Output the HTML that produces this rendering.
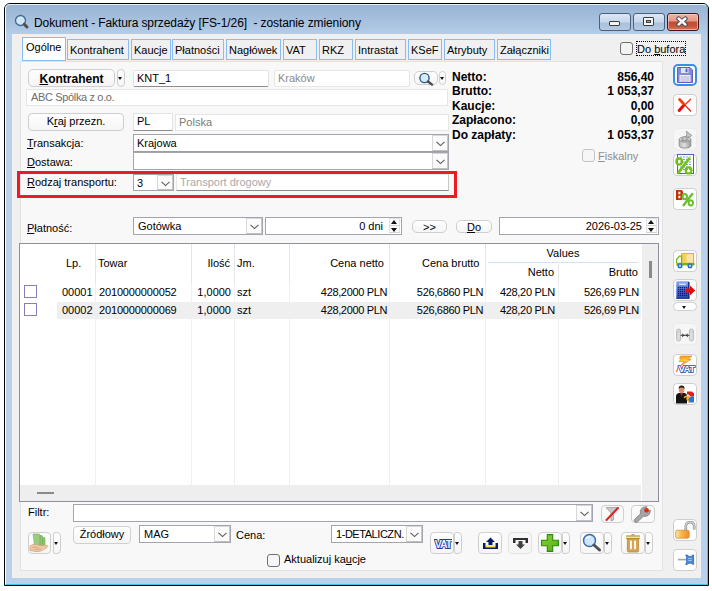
<!DOCTYPE html>
<html><head><meta charset="utf-8">
<style>
*{box-sizing:border-box}
html,body{margin:0;padding:0}
body{width:712px;height:591px;background:#fff;position:relative;overflow:hidden;font-family:"Liberation Sans",sans-serif;font-size:11px;color:#000}
.a{position:absolute}
.t{position:absolute;white-space:nowrap;line-height:13px;font-size:11px}
.win{left:4px;top:3px;width:705px;height:583px;border:1px solid #000;border-radius:6px 6px 0 0;background:linear-gradient(#98b4d3 0px,#a9c3e0 20px,#b6cfe9 32px,#b9d1ea 60px,#b9d1ea)}
.hl{left:5px;top:4px;width:703px;height:581px;border-left:1px solid #fff;border-top:1px solid #e8f0f8;border-right:1px solid #3ec8e8;border-bottom:1px solid #3ec8e8;border-radius:5px 5px 0 0}
.client{left:12px;top:34px;width:689px;height:544px;background:#f0f0f0}
.panel{left:20px;top:61px;width:643px;height:510px;background:#f8f8f8;border:1px solid #e2e2e2}
.tab{position:absolute;top:39px;height:21px;border:1px solid #87bdf0;background:#f0f0f0;line-height:13px;padding-top:4px;padding-left:2px;text-align:left;white-space:nowrap}
.tab.sel{top:37px;height:24px;background:#fff;padding-top:3px;padding-left:3px;border-bottom:1px solid #87bdf0}
.btn{position:absolute;border:1px solid #cfcfcf;border-radius:4px;background:linear-gradient(#fefefe,#f6f6f6);text-align:center;white-space:nowrap;line-height:14px}
.fld{position:absolute;background:#fff;border:1px solid #e3e3e3;border-bottom:1px solid #8c8c8c;white-space:nowrap;line-height:14px}
.fldl{position:absolute;background:#fff;border:1px solid #e6e6e6;white-space:nowrap;line-height:14px}
.cmb{position:absolute;background:#fff;border:1px solid #a3a5ad;white-space:nowrap;line-height:14px;padding-top:1px}
.dd{position:absolute;right:0;top:0;bottom:0;width:16px;background:#fbfbfb;border:1px solid #d8d8d8;border-right-color:#c8c8c8;border-bottom-color:#c0c0c0}
.rb{position:absolute;left:673px;width:24px;height:22px;border:1px solid #cfcfcf;border-radius:4px;background:#fff}
.u{text-decoration:underline}
.b12{font-weight:bold;font-size:12px;line-height:14px}
</style></head><body>
<div class="a win"></div>
<div class="a hl"></div>
<!-- title -->
<svg class="a" style="left:14px;top:14px" width="16" height="16" viewBox="0 0 16 16"><circle cx="6.5" cy="6.5" r="5" fill="#cfe6f8" stroke="#3f6a90" stroke-width="1.3"/><path d="M10.2 10.2 L13 13" stroke="#505050" stroke-width="3" stroke-linecap="round"/></svg>
<div class="t" style="left:34px;top:16px;font-size:12px;line-height:14px;letter-spacing:-0.1px;color:#000">Dokument - Faktura sprzedaży [FS-1/26]&nbsp; - zostanie zmieniony</div>
<div class="a client"></div>

<!-- title buttons -->
<div class="a" style="left:599px;top:13px;width:32px;height:18px;border:1px solid #4e5e7c;border-radius:3px;background:linear-gradient(#dbe7f4 0,#c6d8ec 8px,#a9c1dc 9px,#b6cce3 17px)"></div>
<div class="a" style="left:609px;top:21px;width:11px;height:5px;border:1px solid #3c3c3c;background:#f4f4f4;border-radius:1px"></div>
<div class="a" style="left:633px;top:13px;width:32px;height:18px;border:1px solid #4e5e7c;border-radius:3px;background:linear-gradient(#dbe7f4 0,#c6d8ec 8px,#a9c1dc 9px,#b6cce3 17px)"></div>
<div class="a" style="left:643px;top:17px;width:11px;height:9px;border:1px solid #3c3c3c;background:#f4f4f4;border-radius:1px"></div>
<div class="a" style="left:646px;top:20px;width:5px;height:3px;border:1px solid #3c3c3c;background:#9ab"></div>
<div class="a" style="left:667px;top:13px;width:32px;height:18px;border:1px solid #4a1018;border-radius:3px;background:linear-gradient(#eeb2a4 0,#e09a88 7px,#c24a30 8px,#c85438 12px,#dc7e68 17px);box-shadow:inset 0 0 0 1px rgba(255,220,210,0.55)"></div>
<svg class="a" style="left:675px;top:16px" width="14" height="11" viewBox="0 0 14 11"><path d="M3.6 2.6 L10.4 8.4 M10.4 2.6 L3.6 8.4" stroke="#3c4450" stroke-width="4.4" stroke-linecap="round"/><path d="M3.6 2.6 L10.4 8.4 M10.4 2.6 L3.6 8.4" stroke="#f6f6f6" stroke-width="2.6" stroke-linecap="round"/></svg>
<!-- tabs -->
<div class="tab" style="left:67px;width:62px">Kontrahent</div>
<div class="tab" style="left:131px;width:40px">Kaucje</div>
<div class="tab" style="left:172px;width:52px">Płatności</div>
<div class="tab" style="left:226px;width:55px">Nagłówek</div>
<div class="tab" style="left:283px;width:34px">VAT</div>
<div class="tab" style="left:319px;width:34px">RKZ</div>
<div class="tab" style="left:355px;width:51px">Intrastat</div>
<div class="tab" style="left:408px;width:34px">KSeF</div>
<div class="tab" style="left:444px;width:51px">Atrybuty</div>
<div class="tab" style="left:497px;width:54px">Załączniki</div>
<div class="a panel"></div>
<div class="tab sel" style="left:22px;width:44px">Ogólne</div>
<!-- do bufora -->
<div class="a" style="left:620px;top:42px;width:13px;height:13px;border:1px solid #6f6f6f;border-radius:3px;background:#f3f3f3"></div>
<div class="a" style="left:636px;top:41px;width:50px;height:15px;border:1px dotted #000"></div>
<div class="t" style="left:637px;top:43px;color:#000">Do <span class="u">b</span>ufora</div>

<!-- form -->
<div class="btn" style="left:28px;top:69px;width:87px;height:18px;font-weight:bold;font-size:12px;line-height:17px;padding-top:1px;border-radius:5px"><span class="u">K</span>ontrahent</div>
<div class="btn" style="left:117px;top:69px;width:8px;height:18px"></div>
<div class="a" style="left:118px;top:77px;width:0;height:0;border-left:2.5px solid transparent;border-right:2.5px solid transparent;border-top:3px solid #111"></div>
<div class="fld" style="left:133px;top:70px;width:136px;height:17px;padding-left:3px;border-radius:2px">KNT_1</div>
<div class="fldl" style="left:274px;top:70px;width:136px;height:17px;padding-left:3px;border-radius:2px;color:#8a8a8a">Kraków</div>
<div class="btn" style="left:414px;top:71px;width:24px;height:14px;border-radius:5px"></div>
<svg class="a" style="left:418px;top:72px" width="16" height="14" viewBox="0 0 16 14"><circle cx="6.5" cy="6" r="4.6" fill="#d6ecfb" stroke="#2c5a86" stroke-width="1.4"/><path d="M10 9.5 L14 12.6" stroke="#4a4a4a" stroke-width="2.4" stroke-linecap="round"/></svg>
<div class="btn" style="left:439px;top:71px;width:7px;height:14px;border-radius:4px"></div>
<div class="a" style="left:440px;top:77px;width:0;height:0;border-left:2.5px solid transparent;border-right:2.5px solid transparent;border-top:3px solid #111"></div>
<div class="fldl" style="left:26px;top:89px;width:422px;height:17px;padding-left:4px;color:#6e6e6e;letter-spacing:-0.35px">ABC Spólka z o.o.</div>

<div class="btn" style="left:28px;top:113px;width:96px;height:18px">K<span class="u">r</span>aj przezn.</div>
<div class="fld" style="left:133px;top:113px;width:40px;height:18px;padding-left:3px">PL</div>
<div class="fldl" style="left:175px;top:114px;width:274px;height:17px;padding-left:3px;color:#7a7a7a">Polska</div>

<div class="t" style="left:27px;top:137px"><span class="u">T</span>ransakcja:</div>
<div class="cmb" style="left:133px;top:134px;width:316px;height:19px;padding-left:3px;border-bottom:2px solid #a0a0a0">Krajowa<div class="dd"><svg style="position:absolute;left:3px;top:5px" width="9" height="6" viewBox="0 0 9 6"><path d="M0.5 0.8 L4.5 4.6 L8.5 0.8" fill="none" stroke="#5a5a5a" stroke-width="1.1"/></svg></div></div>
<div class="t" style="left:27px;top:156px"><span class="u">D</span>ostawa:</div>
<div class="cmb" style="left:133px;top:152px;width:316px;height:18px;padding-left:3px"><div class="dd"><svg style="position:absolute;left:3px;top:5px" width="9" height="6" viewBox="0 0 9 6"><path d="M0.5 0.8 L4.5 4.6 L8.5 0.8" fill="none" stroke="#5a5a5a" stroke-width="1.1"/></svg></div></div>

<div class="a" style="left:17px;top:171px;width:440px;height:27px;border:3px solid #ed1c24"></div>
<div class="t" style="left:27px;top:176px"><span class="u">R</span>odzaj transportu:</div>
<div class="cmb" style="left:133px;top:174px;width:41px;height:17px;padding-left:3px">3<div class="dd"><svg style="position:absolute;left:3px;top:5px" width="9" height="6" viewBox="0 0 9 6"><path d="M0.5 0.8 L4.5 4.6 L8.5 0.8" fill="none" stroke="#5a5a5a" stroke-width="1.1"/></svg></div></div>
<div class="fld" style="left:176px;top:174px;width:273px;height:17px;padding-left:3px;color:#a9a9a9;border-color:#e6e6e6 #c8c8c8 #8c8c8c #e6e6e6">Transport drogowy</div>

<div class="t" style="left:27px;top:222px"><span class="u">P</span>łatność:</div>
<div class="cmb" style="left:133px;top:217px;width:130px;height:18px;padding-left:4px">Gotówka<div class="dd"><svg style="position:absolute;left:3px;top:5px" width="9" height="6" viewBox="0 0 9 6"><path d="M0.5 0.8 L4.5 4.6 L8.5 0.8" fill="none" stroke="#5a5a5a" stroke-width="1.1"/></svg></div></div>
<div class="cmb" style="left:265px;top:217px;width:137px;height:18px;text-align:right;padding-right:18px">0 dni</div>
<div class="btn" style="left:412px;top:220px;width:35px;height:13px;line-height:12px;border-radius:5px">&gt;&gt;</div>
<div class="btn" style="left:456px;top:220px;width:36px;height:13px;line-height:12px;border-radius:5px"><span class="u">D</span>o</div>
<div class="cmb" style="left:499px;top:217px;width:160px;height:18px;text-align:right;padding-right:16px">2026-03-25</div>

<div class="a" style="left:389px;top:218px;width:11px;height:15px;background:#fafafa;border:1px solid #e2e2e2;border-bottom-color:#d0d0d0"></div>
<div class="a" style="left:389px;top:225px;width:11px;height:1px;background:#d6d6d6"></div>
<div class="a" style="left:391px;top:220px;width:0;height:0;border-left:3.5px solid transparent;border-right:3.5px solid transparent;border-bottom:4px solid #111"></div>
<div class="a" style="left:391px;top:228px;width:0;height:0;border-left:3.5px solid transparent;border-right:3.5px solid transparent;border-top:4px solid #111"></div>
<div class="a" style="left:646px;top:218px;width:11px;height:15px;background:#fafafa;border:1px solid #e2e2e2;border-bottom-color:#d0d0d0"></div>
<div class="a" style="left:646px;top:225px;width:11px;height:1px;background:#d6d6d6"></div>
<div class="a" style="left:648px;top:220px;width:0;height:0;border-left:3.5px solid transparent;border-right:3.5px solid transparent;border-bottom:4px solid #111"></div>
<div class="a" style="left:648px;top:228px;width:0;height:0;border-left:3.5px solid transparent;border-right:3.5px solid transparent;border-top:4px solid #111"></div>
<!-- summary -->
<div class="t b12" style="left:452px;top:70px">Netto:</div><div class="t b12" style="left:560px;top:70px;width:94px;text-align:right">856,40</div>
<div class="t b12" style="left:452px;top:84px">Brutto:</div><div class="t b12" style="left:560px;top:84px;width:94px;text-align:right">1 053,37</div>
<div class="t b12" style="left:452px;top:99px">Kaucje:</div><div class="t b12" style="left:560px;top:99px;width:94px;text-align:right">0,00</div>
<div class="t b12" style="left:452px;top:113px">Zapłacono:</div><div class="t b12" style="left:560px;top:113px;width:94px;text-align:right">0,00</div>
<div class="t b12" style="left:452px;top:128px">Do zapłaty:</div><div class="t b12" style="left:560px;top:128px;width:94px;text-align:right">1 053,37</div>


<div class="a" style="left:582px;top:149px;width:13px;height:13px;border:1px solid #c4c4c4;border-radius:3px;background:#f6f6f6"></div>
<div class="t" style="left:598px;top:150px;color:#8d8d8d"><span class="u">F</span>iskalny</div>

<!-- grid -->
<div class="a" style="left:19px;top:243px;width:640px;height:259px;background:#fff;border:1px solid #8e8f98"></div>
<div class="a" style="left:642px;top:244px;width:16px;height:257px;background:#eeeeee"></div>
<div class="a" style="left:649px;top:261px;width:3px;height:17px;background:#8a8a8a"></div>
<div class="a" style="left:20px;top:485px;width:621px;height:16px;background:#eeeeee"></div>
<div class="a" style="left:37px;top:492px;width:17px;height:2px;background:#8a8a8a"></div>
<!-- header col lines -->
<div class="a" style="left:95px;top:244px;width:1px;height:39px;background:#e6e6e6"></div>
<div class="a" style="left:191px;top:244px;width:1px;height:39px;background:#e6e6e6"></div>
<div class="a" style="left:234px;top:244px;width:1px;height:39px;background:#e6e6e6"></div>
<div class="a" style="left:289px;top:244px;width:1px;height:39px;background:#e6e6e6"></div>
<div class="a" style="left:389px;top:244px;width:1px;height:39px;background:#e6e6e6"></div>
<div class="a" style="left:485px;top:244px;width:1px;height:39px;background:#e6e6e6"></div>
<div class="a" style="left:558px;top:264px;width:1px;height:19px;background:#e6e6e6"></div>
<div class="a" style="left:488px;top:262px;width:150px;height:1px;background:#cfe4f5"></div>
<!-- body col lines -->
<div class="a" style="left:95px;top:283px;width:1px;height:202px;background:#f0f0f0"></div>
<div class="a" style="left:191px;top:283px;width:1px;height:202px;background:#f0f0f0"></div>
<div class="a" style="left:234px;top:283px;width:1px;height:202px;background:#f0f0f0"></div>
<div class="a" style="left:289px;top:283px;width:1px;height:202px;background:#f0f0f0"></div>
<div class="a" style="left:389px;top:283px;width:1px;height:202px;background:#f0f0f0"></div>
<div class="a" style="left:485px;top:283px;width:1px;height:202px;background:#f0f0f0"></div>
<div class="a" style="left:558px;top:283px;width:1px;height:202px;background:#f0f0f0"></div>
<div class="a" style="left:57px;top:302px;width:584px;height:17px;background:#efefef"></div>
<!-- header text -->
<div class="t" style="left:66px;top:257px">Lp.</div>
<div class="t" style="left:98px;top:257px">Towar</div>
<div class="t" style="left:180px;top:257px;width:50px;text-align:right">Ilość</div>
<div class="t" style="left:237px;top:257px">Jm.</div>
<div class="t" style="left:300px;top:257px;width:84px;text-align:right">Cena netto</div>
<div class="t" style="left:422px;top:257px">Cena brutto</div>
<div class="t" style="left:530px;top:247px;width:66px;text-align:center">Values</div>
<div class="t" style="left:500px;top:266px;width:54px;text-align:right">Netto</div>
<div class="t" style="left:580px;top:266px;width:58px;text-align:right">Brutto</div>
<!-- rows -->
<div class="a" style="left:24px;top:285px;width:13px;height:13px;border:1px solid #8680b4;background:#fff"></div>
<div class="a" style="left:24px;top:303px;width:13px;height:13px;border:1px solid #8680b4;background:#fff"></div>
<div class="t" style="left:62px;top:283px;line-height:18px">00001<br>00002</div>
<div class="t" style="left:99px;top:283px;line-height:18px;letter-spacing:-0.15px">2010000000052<br>2010000000069</div>
<div class="t" style="left:180px;top:283px;width:51px;text-align:right;line-height:18px">1,0000<br>1,0000</div>
<div class="t" style="left:237px;top:283px;line-height:18px">szt<br>szt</div>
<div class="t" style="left:300px;top:283px;width:87px;text-align:right;line-height:18px;letter-spacing:-0.35px">428,2000 PLN<br>428,2000 PLN</div>
<div class="t" style="left:400px;top:283px;width:83px;text-align:right;line-height:18px;letter-spacing:-0.35px">526,6860 PLN<br>526,6860 PLN</div>
<div class="t" style="left:490px;top:283px;width:65px;text-align:right;line-height:18px;letter-spacing:-0.3px">428,20 PLN<br>428,20 PLN</div>
<div class="t" style="left:570px;top:283px;width:69px;text-align:right;line-height:18px;letter-spacing:-0.3px">526,69 PLN<br>526,69 PLN</div>

<!-- bottom -->
<div class="t" style="left:28px;top:506px">Filtr:</div>
<div class="cmb" style="left:73px;top:504px;width:520px;height:18px"><div class="dd"><svg style="position:absolute;left:3px;top:5px" width="9" height="6" viewBox="0 0 9 6"><path d="M0.5 0.8 L4.5 4.6 L8.5 0.8" fill="none" stroke="#5a5a5a" stroke-width="1.1"/></svg></div></div>
<div class="btn" style="left:601px;top:505px;width:23px;height:18px;border-radius:4px;background:#fafafa"></div>
<div class="btn" style="left:631px;top:505px;width:24px;height:18px;border-radius:4px;background:#fafafa"></div>
<div class="btn" style="left:28px;top:532px;width:23px;height:22px;border-radius:4px"></div>
<div class="btn" style="left:53px;top:532px;width:8px;height:22px;border-radius:2px 4px 4px 2px"></div>
<div class="btn" style="left:73px;top:526px;width:58px;height:18px;font-size:11px;line-height:15px">Źródłowy</div>
<div class="cmb" style="left:139px;top:525px;width:92px;height:18px;padding-left:4px">MAG<div class="dd"><svg style="position:absolute;left:3px;top:5px" width="9" height="6" viewBox="0 0 9 6"><path d="M0.5 0.8 L4.5 4.6 L8.5 0.8" fill="none" stroke="#5a5a5a" stroke-width="1.1"/></svg></div></div>
<div class="t" style="left:236px;top:529px">Cena:</div>
<div class="cmb" style="left:331px;top:525px;width:92px;height:18px;padding-left:4px;overflow:hidden;letter-spacing:-0.45px">1-DETALICZN.<div class="dd"><svg style="position:absolute;left:3px;top:5px" width="9" height="6" viewBox="0 0 9 6"><path d="M0.5 0.8 L4.5 4.6 L8.5 0.8" fill="none" stroke="#5a5a5a" stroke-width="1.1"/></svg></div></div>
<div class="a" style="left:267px;top:554px;width:13px;height:13px;border:1px solid #707070;border-radius:3px;background:#f6f6f6"></div>
<div class="t" style="left:284px;top:553px">Aktualizuj ka<span class="u">u</span>cje</div>
<div class="btn" style="left:430px;top:532px;width:24px;height:22px;border-radius:4px"></div>
<div class="btn" style="left:454px;top:532px;width:8px;height:22px;border-radius:2px 4px 4px 2px"></div>
<div class="btn" style="left:478px;top:532px;width:24px;height:22px;border-radius:4px"></div>
<div class="btn" style="left:508px;top:532px;width:24px;height:22px;border-radius:4px;border-color:#e2e2e2;background:#f6f6f6"></div>
<div class="btn" style="left:538px;top:532px;width:24px;height:22px;border-radius:4px"></div>
<div class="btn" style="left:562px;top:532px;width:8px;height:22px;border-radius:2px 4px 4px 2px"></div>
<div class="btn" style="left:580px;top:532px;width:24px;height:22px;border-radius:4px"></div>
<div class="btn" style="left:604px;top:532px;width:8px;height:22px;border-radius:2px 4px 4px 2px"></div>
<div class="btn" style="left:621px;top:532px;width:24px;height:22px;border-radius:4px"></div>
<div class="btn" style="left:645px;top:532px;width:8px;height:22px;border-radius:2px 4px 4px 2px"></div>

<!-- right toolbar -->
<div class="rb" style="top:64px;border:2px solid #3a8ee6;border-radius:5px"></div>
<div class="rb" style="top:94px"></div>
<div class="rb" style="top:128px;border-color:#ececec;background:#f6f6f6"></div>
<div class="rb" style="top:154px"></div>
<div class="rb" style="top:188px"></div>
<div class="rb" style="top:250px"></div>
<div class="rb" style="top:279px"></div>
<div class="rb" style="top:302px;height:9px;border-radius:5px"></div>
<div class="rb" style="top:323px;border-color:#ececec;background:#f6f6f6"></div>
<div class="rb" style="top:354px"></div>
<div class="rb" style="top:383px"></div>
<div class="rb" style="top:519px"></div>
<div class="rb" style="top:549px"></div>

<!-- icons right toolbar -->
<svg class="a" style="left:677px;top:67px" width="16" height="16" viewBox="0 0 16 16">
<path d="M0.5 0.5 H13 L15.5 3 V15.5 H0.5 Z" fill="#8589dc" stroke="#5c60b8"/>
<rect x="4" y="1" width="7.5" height="5" fill="#e4e4ee"/><rect x="8.5" y="1.6" width="2" height="3.6" fill="#5c60b8"/>
<rect x="2.5" y="8" width="11" height="7" fill="#ececf4"/>
<path d="M3.5 10 H12.5 M3.5 12 H12.5 M3.5 14 H12.5" stroke="#a9abd0" stroke-width="0.9"/>
</svg>
<svg class="a" style="left:677px;top:97px" width="16" height="16" viewBox="0 0 16 16">
<path d="M2 13.6 L13.6 2.2" stroke="#ff3000" stroke-width="1.3" stroke-linecap="round"/>
<path d="M2.4 2.4 L13.6 14" stroke="#f02808" stroke-width="1.3" stroke-linecap="round"/>
<path d="M2.2 13.4 L6.4 8.8" stroke="#f00808" stroke-width="3" stroke-linecap="round"/>
<path d="M2.6 2.6 L6.4 6.4" stroke="#ff3a00" stroke-width="2.8" stroke-linecap="round"/>
</svg>
<svg class="a" style="left:678px;top:129px" width="15" height="20" viewBox="0 0 15 20">
<defs><linearGradient id="bk" x1="0" x2="1"><stop offset="0" stop-color="#b8b8b8"/><stop offset="0.45" stop-color="#dedede"/><stop offset="1" stop-color="#9a9a9a"/></linearGradient></defs>
<path d="M1.2 10.5 V16.5 Q1.2 19 7 19 Q12.8 19 12.8 16.5 V10.5 Z" fill="url(#bk)" stroke="#8a8a8a" stroke-width="0.9"/>
<ellipse cx="7" cy="10.5" rx="5.8" ry="2.6" fill="#d8d8d8" stroke="#8a8a8a" stroke-width="0.9"/>
<ellipse cx="7" cy="11" rx="4.2" ry="1.6" fill="#a8a8a8"/>
<path d="M4.5 11.5 Q4.5 8 6.5 7 L8 8.5 L9 4.5 L8.2 2.2 L13.8 6.5 L11 8.5 L10.2 7.5 Q8 10.5 7.5 11.8 Z" fill="#c8c8c8" stroke="#888" stroke-width="0.8" stroke-linejoin="round"/>
</svg>
<svg class="a" style="left:675px;top:154px" width="20" height="21" viewBox="0 0 20 21">
<rect x="2.5" y="0.5" width="16" height="19" fill="#fff" stroke="#4868a8"/>
<path d="M5 3 H16.5 M5 5.5 H16.5 M5 8 H16.5 M5 10.5 H16.5 M5 13 H16.5 M5 15.5 H16.5" stroke="#7aa2dc" stroke-width="1" stroke-dasharray="2 1"/>
<ellipse cx="4.2" cy="7.5" rx="2.8" ry="3" fill="none" stroke="#72c018" stroke-width="2.3"/>
<ellipse cx="13.6" cy="16.4" rx="2.8" ry="3" fill="none" stroke="#72c018" stroke-width="2.3"/>
<path d="M2.6 19.6 L14.6 4" stroke="#72c018" stroke-width="2.8"/>
</svg>
<svg class="a" style="left:676px;top:189px" width="19" height="18" viewBox="0 0 19 18">
<path d="M0 1 H5 Q7 1 7 3 V4 Q7 5.5 6 6 Q7 6.5 7 8 V9 Q7 11 5 11 H0 Z M2.4 2.8 V5.2 H4.4 V2.8 Z M2.4 6.8 V9.2 H4.4 V6.8 Z" fill="#c03200" fill-rule="evenodd"/>
<ellipse cx="8.8" cy="7.6" rx="2.2" ry="2.6" fill="none" stroke="#6cbe30" stroke-width="2"/>
<ellipse cx="14.8" cy="13.8" rx="2.2" ry="2.6" fill="none" stroke="#6cbe30" stroke-width="2"/>
<path d="M7 17 L16.8 4.2" stroke="#6cbe30" stroke-width="2.4"/>
</svg>
<svg class="a" style="left:675px;top:252px" width="21" height="17" viewBox="0 0 21 17">
<rect x="6.6" y="1.6" width="12" height="9.6" fill="#fde4a8" stroke="#e8a820" stroke-width="1"/>
<rect x="7.1" y="2.1" width="4.4" height="8.6" fill="#f8d058"/>
<path d="M1.6 11.5 V7.5 L4.4 4.2 H6.6 V11.5 Z" fill="#fff" stroke="#70b818" stroke-width="1.3"/>
<rect x="1" y="11" width="18.6" height="2.4" fill="#6cb418"/>
<rect x="1" y="11.3" width="1" height="1.6" fill="#f8d058"/>
<circle cx="5" cy="13.8" r="1.9" fill="#c8c8c8" stroke="#1a6ae0" stroke-width="1.3"/>
<circle cx="15" cy="13.8" r="1.9" fill="#c8c8c8" stroke="#1a6ae0" stroke-width="1.3"/>
</svg>
<svg class="a" style="left:676px;top:281px" width="20" height="18" viewBox="0 0 20 18">
<defs><linearGradient id="cg" x1="0" y1="0" x2="0" y2="1"><stop offset="0" stop-color="#8aaaf0"/><stop offset="0.5" stop-color="#4a72d8"/><stop offset="1" stop-color="#2c50b8"/></linearGradient></defs>
<rect x="0.3" y="0.3" width="13" height="17.4" rx="1.2" fill="url(#cg)"/>
<rect x="12" y="1" width="1.5" height="16.5" fill="#1c2e8c"/>
<rect x="0.3" y="16.6" width="13" height="1.2" fill="#1c2e8c"/>
<rect x="3" y="2.6" width="7" height="1.4" fill="#dce8ff"/>
<g fill="#0c1a60"><rect x="1.9" y="5.9" width="1.3" height="1.3"/><rect x="1.9" y="7.9" width="1.3" height="1.3"/><rect x="1.9" y="9.9" width="1.3" height="1.3"/><rect x="1.9" y="11.9" width="1.3" height="1.3"/><rect x="1.9" y="13.9" width="1.3" height="1.3"/><rect x="3.9" y="5.9" width="1.3" height="1.3"/><rect x="3.9" y="7.9" width="1.3" height="1.3"/><rect x="3.9" y="9.9" width="1.3" height="1.3"/><rect x="3.9" y="11.9" width="1.3" height="1.3"/><rect x="3.9" y="13.9" width="1.3" height="1.3"/><rect x="5.9" y="5.9" width="1.3" height="1.3"/><rect x="5.9" y="7.9" width="1.3" height="1.3"/><rect x="5.9" y="9.9" width="1.3" height="1.3"/><rect x="5.9" y="11.9" width="1.3" height="1.3"/><rect x="5.9" y="13.9" width="1.3" height="1.3"/><rect x="7.9" y="5.9" width="1.3" height="1.3"/><rect x="7.9" y="7.9" width="1.3" height="1.3"/><rect x="7.9" y="9.9" width="1.3" height="1.3"/><rect x="7.9" y="11.9" width="1.3" height="1.3"/><rect x="7.9" y="13.9" width="1.3" height="1.3"/><rect x="9.9" y="5.9" width="1.3" height="1.3"/><rect x="9.9" y="7.9" width="1.3" height="1.3"/><rect x="9.9" y="9.9" width="1.3" height="1.3"/><rect x="9.9" y="11.9" width="1.3" height="1.3"/><rect x="9.9" y="13.9" width="1.3" height="1.3"/></g>
<path d="M10 7.6 H14 V4.5 L19.2 9.5 L14 14.5 V11.4 H10 Z" fill="#e20c0c"/>
</svg>
<div class="a" style="left:682px;top:306px;width:0;height:0;border-left:2.5px solid transparent;border-right:2.5px solid transparent;border-top:3px solid #111"></div>
<svg class="a" style="left:676px;top:327px" width="18" height="16" viewBox="0 0 18 16">
<path d="M0.6 3.6 Q0.6 2 2.6 2 Q4.6 2 4.6 3.6 V12.6 Q4.6 14 2.6 14 Q0.6 14 0.6 12.6 Z" fill="#dcdcdc" stroke="#b0b0b0" stroke-width="0.8"/>
<path d="M0.8 4.6 H4.4" stroke="#c0c0c0" stroke-width="0.6"/>
<path d="M13.4 3.6 Q13.4 2 15.4 2 Q17.4 2 17.4 3.6 V12.6 Q17.4 14 15.4 14 Q13.4 14 13.4 12.6 Z" fill="#dcdcdc" stroke="#b0b0b0" stroke-width="0.8"/>
<path d="M13.6 4.6 H17.2" stroke="#c0c0c0" stroke-width="0.6"/>
<path d="M4.6 8.3 H13.4" stroke="#3a3a3a" stroke-width="1"/>
<path d="M8.6 8.3 L5.8 6.2 L6.6 8.3 L5.8 10.4 Z M9.4 8.3 L12.2 6.2 L11.4 8.3 L12.2 10.4 Z" fill="#3a3a3a"/>
</svg>
<svg class="a" style="left:675px;top:355px" width="21" height="19" viewBox="0 0 21 19">
<defs><linearGradient id="lt" x1="0" y1="0" x2="0" y2="1"><stop offset="0" stop-color="#ff9a10"/><stop offset="0.5" stop-color="#ffd040"/><stop offset="1" stop-color="#ff8a00"/></linearGradient></defs>
<path d="M5.5 1 H17 L12.5 4.5 H16 L6 10.5 L9 6.5 H4 L6.5 3.5 H4.5 Z" fill="url(#lt)" stroke="#f07a00" stroke-width="0.6"/>
<path d="M3.5 11 L1.5 17" stroke="#ff8a00" stroke-width="1.4"/>
<text x="11.5" y="17.4" font-family="Liberation Sans" font-weight="bold" font-size="9.5" text-anchor="middle" fill="#fff" stroke="#2a4aa0" stroke-width="1.6" paint-order="stroke" letter-spacing="-0.5">VAT</text>
</svg>
<svg class="a" style="left:675px;top:385px" width="20" height="19" viewBox="0 0 20 19">
<path d="M1 18.5 V11.5 Q1 8 4.5 8 H9 Q12 8 12 11.5 V18.5 Z" fill="#141414"/>
<path d="M5.2 8 L6.6 12 L8 8 Z" fill="#b02020"/>
<ellipse cx="6.6" cy="5" rx="2.8" ry="3.3" fill="#d8946a"/>
<path d="M3.6 4 Q3.6 0.6 6.6 0.6 Q9.6 0.6 9.6 4 Q8 2.4 6.6 2.6 Q5 2.4 3.6 4 Z" fill="#2a1408"/>
<path d="M12 6.5 H17 L19 8.5 V11.5 H15.5 L13.5 9.5 H12 Z" fill="#e02020"/>
<path d="M13 13 L17.5 11 L19 12 V17.5 H13.5 Z" fill="#2a72dc"/>
<path d="M8.5 12 Q11 9.5 13 11 L14.5 10 L14 14 L10.5 13.5 L12 12.5 Q10.5 11.8 9.5 13.5 Z" fill="#f6b020"/>
<path d="M12 14 Q13 16.5 14.5 17" stroke="#f6b020" stroke-width="1.5" fill="none"/>
</svg>
<svg class="a" style="left:675px;top:521px" width="21" height="18" viewBox="0 0 21 18">
<defs><linearGradient id="lk" x1="0" x2="1"><stop offset="0" stop-color="#fde6a0"/><stop offset="0.45" stop-color="#f8b448"/><stop offset="1" stop-color="#f08a28"/></linearGradient></defs>
<path d="M10.8 9.5 V5.6 Q10.8 1.2 15 1.2 Q19.2 1.2 19.2 5.6 V8.6" fill="none" stroke="#8c8c8c" stroke-width="2.6"/>
<path d="M10.8 9.5 V5.6 Q10.8 1.2 15 1.2 Q19.2 1.2 19.2 5.6 V8.6" fill="none" stroke="#d4d4d4" stroke-width="1.2"/>
<rect x="0.6" y="9.2" width="13.6" height="8" rx="1.6" fill="url(#lk)" stroke="#c88838" stroke-width="0.7"/>
</svg>
<svg class="a" style="left:677px;top:554px" width="18" height="12" viewBox="0 0 18 12">
<path d="M1 5.6 H9" stroke="#a4a4a4" stroke-width="1.6"/>
<path d="M8.6 1 Q9.6 1.6 9.6 3.4 V7.6 Q9.6 9.6 8.6 10.4 H10.4 Q10.6 9.2 12.2 9.2 H13.8 Q15.4 9.2 15.6 10.4 H16.6 V1 H15.6 Q15.4 2.4 13.8 2.4 H12.2 Q10.6 2.4 10.4 1 Z" fill="#4c8ad6" stroke="#2a64b8" stroke-width="0.8"/>
<path d="M11.2 4.6 H14.6 M11.2 6.6 H14.6" stroke="#b0d0f4" stroke-width="0.9"/>
</svg>
<!-- bottom icons -->
<svg class="a" style="left:29px;top:533px" width="20" height="20" viewBox="0 0 20 20">
<path d="M4 1 H10.5 L11 13.5 H5.5 L5 8 L4.5 5 Z" fill="#9ccc80" stroke="#7aae5e" stroke-width="0.6"/>
<path d="M11 2.5 H13 L13.5 4 V13.5 H11 Z" fill="#8cc270" stroke="#74a858" stroke-width="0.6"/>
<path d="M13.5 4.5 H15.5 L16 6 V13.5 H13.5 Z" fill="#8cc270" stroke="#74a858" stroke-width="0.6"/>
<path d="M1 13 Q4 10.5 8 11.5 L11 12.5 Q15 12 18.5 12.5 Q19.5 13.5 18 14.5 L13 17.5 Q9 19.5 5 18.2 L1 17.5 Z" fill="#eccaa6" stroke="#d4a074" stroke-width="0.7"/>
<path d="M3.5 14.5 Q6.5 13.5 9.5 15 M5.5 16.5 Q9 16.5 12 16" stroke="#d09a6a" stroke-width="0.7" fill="none"/>
</svg>
<div class="a" style="left:54px;top:542px;width:0;height:0;border-left:2.5px solid transparent;border-right:2.5px solid transparent;border-top:3px solid #111"></div>
<svg class="a" style="left:434px;top:537px" width="18" height="12" viewBox="0 0 18 12"><text x="9" y="10.6" font-family="Liberation Sans" font-weight="bold" font-size="10.5" text-anchor="middle" fill="#eef0fa" stroke="#22389a" stroke-width="1.8" paint-order="stroke" letter-spacing="-0.9">VAT</text></svg>
<div class="a" style="left:455px;top:542px;width:0;height:0;border-left:2.5px solid transparent;border-right:2.5px solid transparent;border-top:3px solid #111"></div>
<svg class="a" style="left:482px;top:537px" width="17" height="13" viewBox="0 0 17 13">
<path d="M1 6 V12 H16 V6 H13.5 V9 H3.5 V6 Z" fill="#0a1a6a"/>
<rect x="3.5" y="8.5" width="10" height="2" fill="#f8e050"/>
<path d="M8.5 0.5 L13 5 H10.5 V8 H6.5 V5 H4 Z" fill="#0a1a6a"/>
</svg>
<svg class="a" style="left:512px;top:537px" width="17" height="13" viewBox="0 0 17 13">
<path d="M1 1 V6 H3.5 V3 H13.5 V6 H16 V1 Z" fill="#303030"/>
<path d="M6.5 4 H10.5 V7.5 H13 L8.5 12 L4 7.5 H6.5 Z" fill="#404040"/>
</svg>
<svg class="a" style="left:541px;top:534px" width="18" height="18" viewBox="0 0 18 18">
<defs><linearGradient id="pg" x1="0" y1="0" x2="1" y2="1"><stop offset="0" stop-color="#84d82c"/><stop offset="1" stop-color="#5aa820"/></linearGradient></defs>
<path d="M6.3 0.6 H11.7 V6.3 H17.4 V11.7 H11.7 V17.4 H6.3 V11.7 H0.6 V6.3 H6.3 Z" fill="url(#pg)" stroke="#2c8a0a" stroke-width="1.1"/>
</svg>
<div class="a" style="left:563px;top:542px;width:0;height:0;border-left:2.5px solid transparent;border-right:2.5px solid transparent;border-top:3px solid #111"></div>
<svg class="a" style="left:582px;top:533px" width="20" height="19" viewBox="0 0 20 19">
<circle cx="7.5" cy="7.5" r="6" fill="#cde6fb" stroke="#3a6aa8" stroke-width="1.5"/>
<path d="M4.5 5.5 Q6 3.5 8.5 3.8" stroke="#fff" stroke-width="1.2" fill="none"/>
<path d="M12 12 L17.5 17" stroke="#505050" stroke-width="3" stroke-linecap="round"/>
</svg>
<div class="a" style="left:605px;top:542px;width:0;height:0;border-left:2.5px solid transparent;border-right:2.5px solid transparent;border-top:3px solid #111"></div>
<svg class="a" style="left:625px;top:533px" width="16" height="20" viewBox="0 0 16 20">
<path d="M5.6 2.6 Q6 0.9 8 0.9 Q10 0.9 10.4 2.6 Z" fill="#c89448"/>
<rect x="1" y="2.4" width="14" height="1.3" fill="#c89448"/>
<rect x="1" y="4.7" width="14" height="1.3" fill="#c89448"/>
<path d="M2.4 5.8 H13.6 V17.6 Q13.6 19 12.4 19 H3.6 Q2.4 19 2.4 17.6 Z" fill="#d4a458" stroke="#b88438" stroke-width="0.8"/>
<rect x="5" y="7.6" width="1.9" height="8.6" fill="#fffaf0"/>
<rect x="9.1" y="7.6" width="1.9" height="8.6" fill="#fffaf0"/>
</svg>
<div class="a" style="left:646px;top:542px;width:0;height:0;border-left:2.5px solid transparent;border-right:2.5px solid transparent;border-top:3px solid #111"></div>
<svg class="a" style="left:604px;top:506px" width="16" height="16" viewBox="0 0 16 16">
<path d="M2 1.5 H14 L9.5 7 V14 L7 15 V7 Z" fill="#c8c8c8" stroke="#a0a0a0" stroke-width="0.8"/>
<path d="M2.5 14 L14 2" stroke="#e02020" stroke-width="2" stroke-linecap="round"/>
</svg>
<svg class="a" style="left:632px;top:505px" width="20" height="18" viewBox="0 0 20 18">
<path d="M2.5 14.5 L8.5 8.8 Q7.6 5.6 9.6 3.4 Q11.8 1.2 15 1.8 L12.4 4.6 L13.4 6.8 L15.8 7.4 L18.2 5 Q18.6 8 16.6 10 Q14.4 12 11.4 11.2 L5.4 17 Q4.2 18 3 17 Q1.6 15.8 2.5 14.5 Z" fill="#a6a6a6" stroke="#7c7c7c" stroke-width="0.8"/>
<circle cx="14.6" cy="5.2" r="2.3" fill="#e02a0a"/>
</svg>
</body></html>
